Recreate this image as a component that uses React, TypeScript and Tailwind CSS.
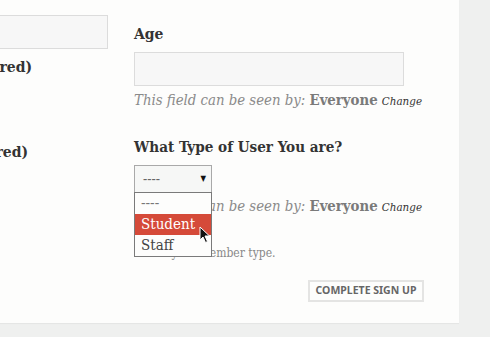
const serif = { fontFamily: '"DejaVu Serif Condensed", "DejaVu Serif", "Liberation Serif", serif', fontStretch: "condensed" };

function Visibility() {
    return (
        <p className="text-[14.8px] leading-[22px] text-[#8a8a8a] italic whitespace-nowrap">
            This field can be seen by:{" "}
            <span className="not-italic font-bold text-[#7a7a7a]">Everyone</span>{" "}
            <a className="text-[11.5px] text-[#333] italic">Change</a>
        </p>
    );
}

export default function App() {
    return (
        <div className="w-[490px] h-[337px] overflow-hidden bg-[#eff0ef]" style={serif}>
            <div className="relative w-[459px] h-[323px] bg-[#fdfdfc] overflow-hidden flex shadow-[0_1px_1px_rgba(0,0,0,0.04)]">
                {/* left column, mostly scrolled off */}
                <div className="ml-[-152px] w-[260px] shrink-0 flex flex-col">
                    <div className="mt-[15px] h-[34px] border border-[#dcdcdc] bg-[#f7f7f7]" />
                    <div className="mt-[6px] mr-[76px] flex justify-end">
                        <label className="text-[15.5px] leading-[24px] font-bold text-[#333] whitespace-nowrap">
                            Choose a Password (required)
                        </label>
                    </div>
                    <div className="mt-[61px] mr-[80px] flex justify-end">
                        <label className="text-[15.5px] leading-[24px] font-bold text-[#333] whitespace-nowrap">
                            Confirm Password (required)
                        </label>
                    </div>
                </div>

                {/* right column */}
                <div className="ml-[26px] w-[270px] shrink-0 flex flex-col pt-[22px]">
                    <label className="text-[15.5px] leading-[24px] font-bold text-[#333]">Age</label>
                    <div className="mt-[6px] h-[34px] border border-[#dcdcdc] bg-[#f7f7f7]" />
                    <div className="mt-[3px]">
                        <Visibility />
                    </div>

                    <label className="mt-[23px] text-[15.1px] leading-[24px] font-bold text-[#333] whitespace-nowrap">
                        What Type of User You are?
                    </label>
                    <div className="relative mt-[6px] w-[78px] h-[28px] border border-[#a9a9a9] bg-[#f6f7f6] flex items-center justify-between pl-[8px] pr-[5px] text-[14px] text-[#666]">
                        <span>----</span>
                        <span className="text-[8px] text-[#111]">▼</span>
                    </div>
                    <div className="mt-[2px]">
                        <Visibility />
                    </div>
                    <p className="mt-[26px] text-[12px] leading-[18px] text-[#888]">Select your member type.</p>

                    <div className="mt-[18px] flex justify-end">
                        <button
                            className="mr-[-20px] h-[22px] w-[116px] border-2 border-[#e4e4e3] bg-[#fdfdfc] text-[10.5px] font-bold text-[#666] whitespace-nowrap"
                            style={{ fontFamily: '"Noto Sans", "Open Sans", sans-serif', fontStretch: "normal" }}
                        >
                            COMPLETE SIGN UP
                        </button>
                    </div>
                </div>

                {/* open select list */}
                <div className="absolute left-[134px] top-[192px] w-[78px] border border-[#7a7a7a] bg-[#fdfdfc] text-[15px] leading-[21px] text-[#444]">
                    <div className="pl-[6px] text-[#777]">----</div>
                    <div className="pl-[6px] bg-[#d54a39] text-white">Student</div>
                    <div className="pl-[6px]">Staff</div>
                </div>

                {/* mouse cursor */}
                <svg className="absolute left-[199px] top-[226px]" width="12" height="18" viewBox="0 0 12 18">
                    <path d="M1 1 L1 14 L4 11 L6.5 16.5 L8.5 15.5 L6 10 L10.5 10 Z" fill="#111" stroke="#fff" strokeWidth="1" strokeLinejoin="round" />
                </svg>
            </div>
        </div>
    );
}
